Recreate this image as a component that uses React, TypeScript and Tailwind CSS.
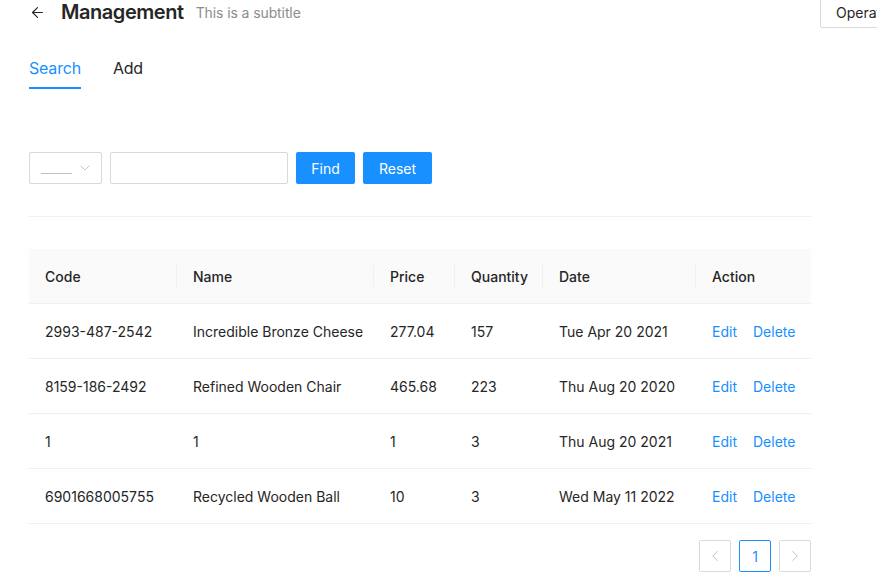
import { ArrowLeft, ChevronDown, ChevronLeft, ChevronRight } from "lucide-react";

const rows = [
  { code: "2993-487-2542", name: "Incredible Bronze Cheese", price: "277.04", qty: "157", date: "Tue Apr 20 2021" },
  { code: "8159-186-2492", name: "Refined Wooden Chair", price: "465.68", qty: "223", date: "Thu Aug 20 2020" },
  { code: "1", name: "1", price: "1", qty: "3", date: "Thu Aug 20 2021" },
  { code: "6901668005755", name: "Recycled Wooden Ball", price: "10", qty: "3", date: "Wed May 11 2022" },
];

// column widths taken from the header separators
const cols = ["w-[148px]", "w-[197px]", "w-[81px]", "w-[88px]", "w-[153px]", "w-[115px]"];
const headers = ["Code", "Name", "Price", "Quantity", "Date", "Action"];

const App = () => {
  return (
    <div
      className="w-[877px] h-[582px] overflow-hidden bg-white text-[14px] text-[#262626]"
      style={{ fontFamily: "Inter, 'Noto Sans', sans-serif" }}
    >
      {/* page header */}
      <div className="flex h-[24px] items-center">
        <div className="flex w-[820px] shrink-0 items-center pl-[29px]">
          <ArrowLeft size={17} strokeWidth={1.6} className="text-[#262626]" />
          <span className="ml-[15px] text-[20px] font-semibold leading-[24px] tracking-[-0.45px] text-[#262626]">Management</span>
          <span className="ml-[12px] text-[14px] tracking-[-0.1px] text-[#8c8c8c]">This is a subtitle</span>
        </div>
        <button className="h-[32px] shrink-0 whitespace-nowrap rounded-[2px] border border-[#d9d9d9] bg-white px-[15px] text-[14px] text-[#262626]">
          Operation
        </button>
      </div>

      <div className="w-[811px] pl-[29px]">
        {/* tabs */}
        <div className="mt-[32px] flex gap-[32px] text-[16px] tracking-[-0.2px]">
          <div className="flex flex-col">
            <span className="leading-[24px] text-[#1890ff]">Search</span>
            <div className="mt-[7px] h-[2px] bg-[#1890ff]" />
          </div>
          <span className="leading-[24px]">Add</span>
        </div>

        {/* filters */}
        <div className="mt-[63px] flex items-center gap-[8px]">
          <div className="flex h-[32px] w-[73px] items-center justify-between rounded-[2px] border border-[#d9d9d9] pl-[11px] pr-[8px]">
            <div className="mt-[10px] h-px w-[31px] bg-[#bfbfbf]" />
            <ChevronDown size={16} strokeWidth={1.4} className="text-[#bfbfbf]" />
          </div>
          <input className="h-[32px] w-[178px] rounded-[2px] border border-[#d9d9d9] px-[11px] outline-none" />
          <button className="h-[32px] w-[59px] rounded-[2px] bg-[#1890ff] text-white">Find</button>
          <button className="h-[32px] w-[69px] rounded-[2px] bg-[#1890ff] text-white">Reset</button>
        </div>

        <div className="mt-[32px] h-px bg-[#f0f0f0]" />

        {/* table */}
        <div className="mt-[32px]">
          <div className="flex h-[55px] items-center border-b border-[#f0f0f0] bg-[#fafafa] font-medium">
            {headers.map((h, i) => (
              <div key={h} className={`relative flex h-full items-center px-[16px] ${cols[i]}`}>
                {h}
                {i < headers.length - 1 && (
                  <div className="absolute right-0 top-1/2 h-[22px] w-px -translate-y-1/2 bg-[#f0f0f0]" />
                )}
              </div>
            ))}
          </div>
          {rows.map((r) => (
            <div key={r.code} className="flex h-[55px] items-center whitespace-nowrap border-b border-[#f0f0f0]">
              <div className={`px-[16px] ${cols[0]}`}>{r.code}</div>
              <div className={`px-[16px] ${cols[1]}`}>{r.name}</div>
              <div className={`px-[16px] ${cols[2]}`}>{r.price}</div>
              <div className={`px-[16px] ${cols[3]}`}>{r.qty}</div>
              <div className={`px-[16px] ${cols[4]}`}>{r.date}</div>
              <div className={`flex gap-[16px] px-[16px] text-[#1890ff] ${cols[5]}`}>
                <span>Edit</span>
                <span>Delete</span>
              </div>
            </div>
          ))}
        </div>

        {/* pagination */}
        <div className="mt-[16px] flex justify-end gap-[8px]">
          <div className="flex h-[32px] w-[32px] items-center justify-center rounded-[2px] border border-[#d9d9d9] text-[#bfbfbf]">
            <ChevronLeft size={18} strokeWidth={1.3} />
          </div>
          <div className="flex h-[32px] w-[32px] items-center justify-center rounded-[2px] border border-[#1890ff] text-[#1890ff]">
            1
          </div>
          <div className="flex h-[32px] w-[32px] items-center justify-center rounded-[2px] border border-[#d9d9d9] text-[#bfbfbf]">
            <ChevronRight size={18} strokeWidth={1.3} />
          </div>
        </div>
      </div>
    </div>
  );
};

export default App;
